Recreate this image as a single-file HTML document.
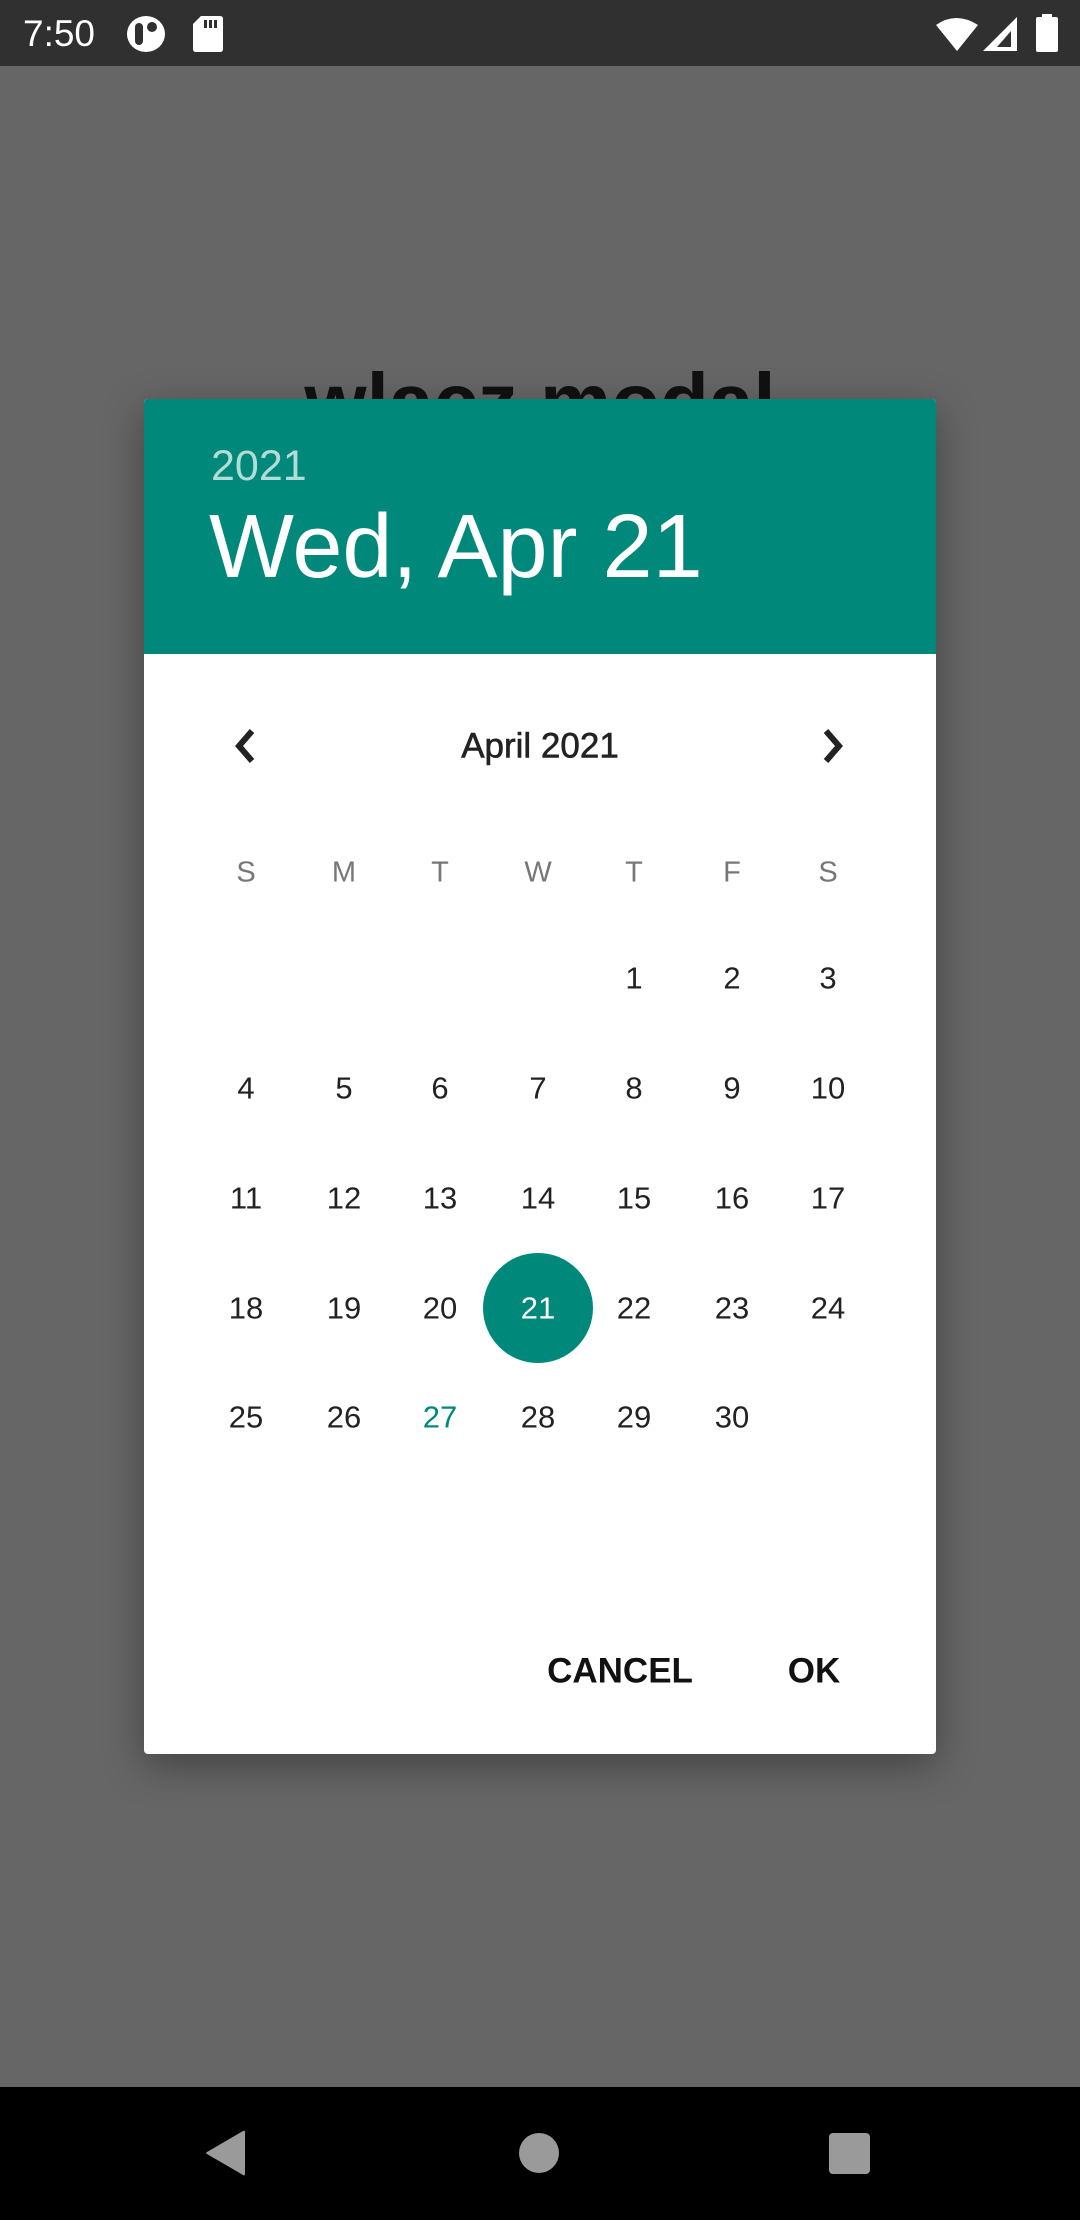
<!DOCTYPE html>
<html><head><meta charset="utf-8"><style>
*{margin:0;padding:0;box-sizing:border-box}
body{width:1080px;height:2220px;position:relative;overflow:hidden;background:#666;font-family:"Liberation Sans",sans-serif}
.abs{position:absolute}
.c{position:absolute;transform:translate(-50%,-50%);white-space:nowrap;line-height:1}
#sb{left:0;top:0;width:1080px;height:66px;background:#303030}
#nav{left:0;top:2087px;width:1080px;height:133px;background:#000}
#dlg{left:144px;top:399px;width:792px;height:1355px;background:#fff;border-radius:4px;box-shadow:0 12px 40px rgba(0,0,0,.35);overflow:hidden}
#hdr{left:0;top:0;width:792px;height:255px;background:#00897B}
.d{font-size:31px;color:#222}
.w{font-size:29px;color:#777}
</style></head><body>
<div id="sb" class="abs">
<div class="abs" style="left:23px;top:13px;color:#fff;font-size:37px">7:50</div>
<svg class="abs" style="left:126px;top:15px" width="40" height="38" viewBox="0 0 40 38"><ellipse cx="20" cy="19" rx="19" ry="18" fill="#fff"/><rect x="9" y="8" width="8" height="22" rx="4" fill="#303030"/><circle cx="26" cy="12" r="5" fill="#303030"/></svg>
<svg class="abs" style="left:193px;top:16px" width="30" height="36" viewBox="0 0 30 36"><path d="M8 0H27Q30 0 30 3V33Q30 36 27 36H3Q0 36 0 33V8Z" fill="#fff"/><rect x="11" y="4" width="3" height="8" fill="#303030"/><rect x="16" y="4" width="3" height="8" fill="#303030"/><rect x="21" y="4" width="3" height="8" fill="#303030"/></svg>
<svg class="abs" style="left:936px;top:17px" width="44" height="34" viewBox="0 0 44 34"><path d="M0 8Q20 -6 42 8L21 34Z" fill="#fff"/></svg>
<svg class="abs" style="left:983px;top:17px" width="34" height="34" viewBox="0 0 34 34"><path d="M34 0V34H0Z" fill="#fff"/><path d="M28 14V30H14Z" fill="#303030"/></svg>
<svg class="abs" style="left:1036px;top:14px" width="22" height="38" viewBox="0 0 22 38"><rect x="6" y="0" width="10" height="4" fill="#fff"/><rect x="0" y="3" width="22" height="35" rx="2" fill="#fff"/></svg>
</div>
<div class="abs" style="left:0;top:362px;width:1080px;text-align:center;font-size:80px;font-weight:bold;color:#111;line-height:1">wlacz modal</div>
<div id="dlg" class="abs">
<div id="hdr" class="abs">
<div class="abs" style="left:67px;top:46px;font-size:43px;color:#b2dcd6;line-height:1">2021</div>
<div class="abs" style="left:65px;top:103px;font-size:90px;color:#fff;line-height:1">Wed, Apr 21</div>
</div>
<svg class="abs" style="left:86px;top:328px" width="32" height="38" viewBox="0 0 32 38"><path d="M22 4L9 19L22 34" stroke="#222" stroke-width="6" fill="none"/></svg>
<svg class="abs" style="left:672px;top:328px" width="32" height="38" viewBox="0 0 32 38"><path d="M10 4L23 19L10 34" stroke="#222" stroke-width="6" fill="none"/></svg>
<div class="c" style="left:396px;top:347px;font-size:35px;color:#222;-webkit-text-stroke:0.6px #222">April 2021</div>
<div class="c w" style="left:102px;top:474px">S</div><div class="c w" style="left:200px;top:474px">M</div><div class="c w" style="left:296px;top:474px">T</div><div class="c w" style="left:394px;top:474px">W</div><div class="c w" style="left:490px;top:474px">T</div><div class="c w" style="left:588px;top:474px">F</div><div class="c w" style="left:684px;top:474px">S</div>
<div class="abs" style="left:339px;top:854px;width:110px;height:110px;border-radius:50%;background:#00897B"></div>
<div class="c d" style="left:490px;top:579px">1</div><div class="c d" style="left:588px;top:579px">2</div><div class="c d" style="left:684px;top:579px">3</div>
<div class="c d" style="left:102px;top:689px">4</div><div class="c d" style="left:200px;top:689px">5</div><div class="c d" style="left:296px;top:689px">6</div><div class="c d" style="left:394px;top:689px">7</div><div class="c d" style="left:490px;top:689px">8</div><div class="c d" style="left:588px;top:689px">9</div><div class="c d" style="left:684px;top:689px">10</div>
<div class="c d" style="left:102px;top:799px">11</div><div class="c d" style="left:200px;top:799px">12</div><div class="c d" style="left:296px;top:799px">13</div><div class="c d" style="left:394px;top:799px">14</div><div class="c d" style="left:490px;top:799px">15</div><div class="c d" style="left:588px;top:799px">16</div><div class="c d" style="left:684px;top:799px">17</div>
<div class="c d" style="left:102px;top:909px">18</div><div class="c d" style="left:200px;top:909px">19</div><div class="c d" style="left:296px;top:909px">20</div><div class="c d" style="left:394px;top:909px;color:#fff">21</div><div class="c d" style="left:490px;top:909px">22</div><div class="c d" style="left:588px;top:909px">23</div><div class="c d" style="left:684px;top:909px">24</div>
<div class="c d" style="left:102px;top:1018px">25</div><div class="c d" style="left:200px;top:1018px">26</div><div class="c d" style="left:296px;top:1018px;color:#00897B">27</div><div class="c d" style="left:394px;top:1018px">28</div><div class="c d" style="left:490px;top:1018px">29</div><div class="c d" style="left:588px;top:1018px">30</div>
<div class="c" style="left:476px;top:1272px;font-size:35px;font-weight:bold;color:#111">CANCEL</div>
<div class="c" style="left:670px;top:1272px;font-size:35px;font-weight:bold;color:#111">OK</div>
</div>
<div id="nav" class="abs">
<svg class="abs" style="left:205px;top:43px" width="42" height="46" viewBox="0 0 42 46"><path d="M40 2V44Q40 46 38 45L2 24Q0 23 2 22L38 1Q40 0 40 2Z" fill="#9a9a9a"/></svg>
<div class="abs" style="left:519px;top:2px;margin-top:44px;width:40px;height:40px;border-radius:50%;background:#9a9a9a"></div>
<div class="abs" style="left:829px;top:46px;width:41px;height:41px;border-radius:4px;background:#9a9a9a"></div>
</div>
</body></html>
